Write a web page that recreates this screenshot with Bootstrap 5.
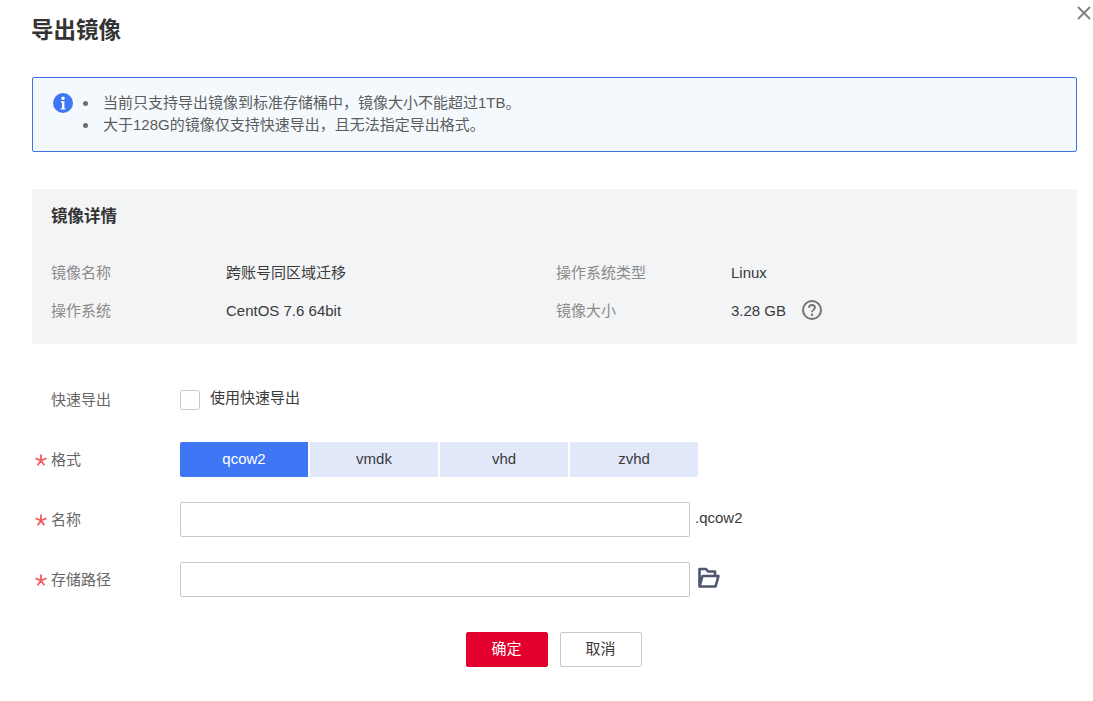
<!DOCTYPE html>
<html lang="zh-CN">
<head>
<meta charset="utf-8">
<title>导出镜像</title>
<link href="https://cdn.jsdelivr.net/npm/bootstrap@5.3.0/dist/css/bootstrap.min.css" rel="stylesheet">
<style>
html,body{height:100%;}
body{font-family:"Liberation Sans","Noto Sans CJK SC",sans-serif;font-size:15px;color:#3a3a3a;background:#fff;overflow:hidden;}
.dlg{position:relative;padding:0 16px 0 32px;width:1093px;height:701px;}
.dlg-close{position:absolute;left:1076px;top:5px;width:16px;height:16px;padding:0;border:0;background:none;line-height:0;}
.dlg-title{margin:0 0 0 -1px;height:77px;padding-top:15px;font-size:22.5px;line-height:32px;font-weight:700;color:#333;}
.tip{height:75px;margin:0 0 37px;padding:14px 19px;background:#f4f9fe;border:1px solid #3f71e0;border-radius:2px;}
.tip-icon{width:22px;height:22px;flex:none;}
.tip ul{margin:0;padding-left:29px;color:#5c5c5c;line-height:22px;list-style:none;}
.tip li{position:relative;}
.tip li::before{content:"";position:absolute;left:-20px;top:9px;width:5px;height:5px;border-radius:50%;background:#6e6e6e;}
.info{height:155px;margin-bottom:38px;padding:15px 19px 0;background:#f3f4f6;}
.info h2{margin:0 0 25px;font-size:16.5px;line-height:24px;font-weight:700;color:#333;}
.inf-row{height:38px;align-items:center;}
.inf-k{width:175px;color:#8a8a8a;flex:none;padding-top:2px;}
.inf-v{width:330px;flex:none;padding-top:2px;}
.inf-w{padding-top:2px;}
.frm-row{display:flex;align-items:center;height:35px;margin-bottom:25px;}
.frm-lab{position:relative;width:148px;padding-left:19px;padding-top:2px;flex:none;color:#666;}
.req{position:absolute;left:3px;top:7px;width:12px;height:12px;display:block;}
.box{width:20px;height:20px;border:1px solid #c9c9c9;border-radius:3px;background:#fff;margin:0 10px 0 0;appearance:none;flex:none;}
.box-txt{padding-bottom:2px;}
.seg{width:128px;height:35px;margin-right:2px;padding:0;border:0;border-radius:0;background:#e1e8fa;color:#3a3a3a;font-size:15px;}
.seg-on{background:#3f76f6;color:#fff;border-radius:2px 0 0 2px;}
.seg-end{border-radius:0 2px 2px 0;}
.inp{width:510px;height:35px;border:1px solid #c9c9c9;border-radius:2px;padding:0 8px;flex:none;}
.btn-ok,.btn-no{width:82px;height:35px;padding:0;font-size:15px;border-radius:2px;}
.btn-ok{background:#e3002c;border:1px solid #e3002c;color:#fff;}
.btn-no{background:#fff;border:1px solid #c9c9c9;color:#3a3a3a;}
.acts{margin-top:35px;gap:12px;padding-right:2px;}
.suffix{margin-left:5px;padding-bottom:3px;}
</style>
</head>
<body>
<div class="dlg">
  <button class="dlg-close" type="button" aria-label="关闭">
    <svg width="16" height="16" viewBox="0 0 16 16"><path d="M2 2 14 14M14 2 2 14" stroke="#7f7f7f" stroke-width="1.8" fill="none"/></svg>
  </button>
  <h1 class="dlg-title">导出镜像</h1>
  <div class="tip d-flex">
    <svg class="tip-icon" viewBox="0 0 22 22"><circle cx="11" cy="11" r="10" fill="#3f76f6"/><circle cx="11" cy="6.3" r="1.7" fill="#fff"/><path d="M8.8 9.2h3.6v7h1v1.300H8.800v-1.300h1.200v-5.700H8.800z" fill="#fff"/></svg>
    <ul>
      <li>当前只支持导出镜像到标准存储桶中，镜像大小不能超过1TB。</li>
      <li>大于128G的镜像仅支持快速导出，且无法指定导出格式。</li>
    </ul>
  </div>
  <section class="info">
    <h2>镜像详情</h2>
    <div class="d-flex inf-row"><span class="inf-k">镜像名称</span><span class="inf-v">跨账号同区域迁移</span><span class="inf-k">操作系统类型</span><span class="inf-w">Linux</span></div>
    <div class="d-flex inf-row"><span class="inf-k">操作系统</span><span class="inf-v">CentOS 7.6 64bit</span><span class="inf-k">镜像大小</span><span class="inf-w">3.28 GB</span>
      <svg class="ms-3" width="20" height="20" viewBox="0 0 20 20"><circle cx="10" cy="10" r="9" fill="none" stroke="#757575" stroke-width="2"/><path d="M7 7.800C7 5.900 8.400 5 10 5s3 1 3 2.600c0 2.300-3 2.300-3 4.600" fill="none" stroke="#757575" stroke-width="1.800"/><circle cx="10" cy="14.800" r="1.200" fill="#757575"/></svg>
    </div>
  </section>
  <div class="frm-row"><span class="frm-lab">快速导出</span><input class="box" type="checkbox" aria-label="使用快速导出"><span class="box-txt">使用快速导出</span></div>
  <div class="frm-row"><span class="frm-lab"><svg class="req" viewBox="0 0 12 12"><path d="M6 .5V6.500M.6 4.300 6 6.500M11.400 4.300 6 6.500M2.600 11.200 6 6.500M9.400 11.200 6 6.500" stroke="#f25b5b" stroke-width="1.800" fill="none"/></svg>格式</span>
    <div class="d-flex"><button type="button" class="btn seg seg-on">qcow2</button><button type="button" class="btn seg">vmdk</button><button type="button" class="btn seg">vhd</button><button type="button" class="btn seg seg-end">zvhd</button></div>
  </div>
  <div class="frm-row"><span class="frm-lab"><svg class="req" viewBox="0 0 12 12"><path d="M6 .5V6.500M.6 4.300 6 6.500M11.400 4.300 6 6.500M2.600 11.200 6 6.500M9.400 11.200 6 6.500" stroke="#f25b5b" stroke-width="1.800" fill="none"/></svg>名称</span><input class="inp" type="text" aria-label="名称"><span class="suffix">.qcow2</span></div>
  <div class="frm-row mb-0"><span class="frm-lab"><svg class="req" viewBox="0 0 12 12"><path d="M6 .5V6.500M.6 4.300 6 6.500M11.400 4.300 6 6.500M2.600 11.200 6 6.500M9.400 11.200 6 6.500" stroke="#f25b5b" stroke-width="1.800" fill="none"/></svg>存储路径</span><input class="inp" type="text" aria-label="存储路径">
    <svg class="ms-2 mb-1" width="22" height="22" viewBox="0 0 22 22"><path d="M1.500 19.500V2h6.500l2 2.500h7v3.500M1.500 19.500 4.500 9h16l-3 10.500z" fill="none" stroke="#4e5670" stroke-width="2.600" stroke-linejoin="round"/></svg>
  </div>
  <div class="d-flex justify-content-center acts"><button type="button" class="btn btn-ok">确定</button><button type="button" class="btn btn-no">取消</button></div>
</div>
</body>
</html>
